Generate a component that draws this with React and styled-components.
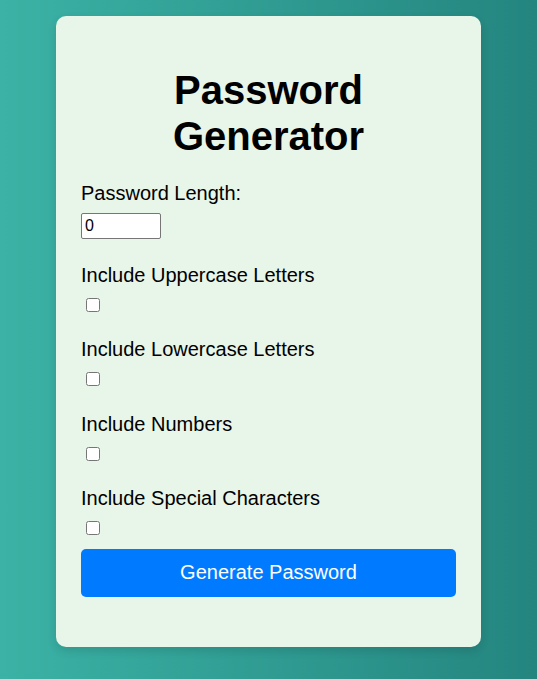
import styled, { createGlobalStyle } from "styled-components";

const GlobalStyle = createGlobalStyle`
  html, body {
    margin: 0;
    padding: 0;
  }

  body {
    min-height: 100vh;
    font-family: "Liberation Sans", Arial, sans-serif;
    background: linear-gradient(to right, #3bb2a5, #24857f);
  }
`;

const Page = styled.div`
  display: flex;
  justify-content: center;
  padding: 16px 0 31px;
`;

const Card = styled.div`
  width: 425px;
  box-sizing: border-box;
  padding: 25px;
  background-color: #e8f5e9;
  border-radius: 10px;
  box-shadow: 0 4px 10px rgba(0, 0, 0, 0.12);
  display: flex;
  flex-direction: column;
`;

const Title = styled.h1`
  margin: 26px 0 23px;
  font-size: 40px;
  font-weight: bold;
  line-height: 46px;
  text-align: center;
  color: #000;
`;

const Field = styled.div`
  display: flex;
  flex-direction: column;
  align-items: flex-start;

  & + & {
    margin-top: 24.6px;
  }
`;

const Label = styled.label`
  display: block;
  font-size: 20px;
  line-height: 23px;
  color: #000;
  margin-bottom: 8px;
`;

const NumberInput = styled.input`
  width: 80px;
  height: 26px;
  box-sizing: border-box;
  font-family: "Liberation Sans", Arial, sans-serif;
  font-size: 16px;
  padding: 1px 3px;
  border: 1px solid #767676;
  border-radius: 2px;
  background: #fff;
  color: #000;
`;

const Checkbox = styled.input`
  width: 14px;
  height: 14px;
  margin: 3px 3px 2px 5px;
`;

const GenerateButton = styled.button`
  margin: 11.6px 0 25px;
  height: 48px;
  border: none;
  border-radius: 5px;
  background-color: #007bff;
  color: #fff;
  font-family: "Liberation Sans", Arial, sans-serif;
  font-size: 20px;
  cursor: pointer;
`;

const options = [
  { id: "upper", label: "Include Uppercase Letters" },
  { id: "lower", label: "Include Lowercase Letters" },
  { id: "numbers", label: "Include Numbers" },
  { id: "special", label: "Include Special Characters" },
];

const App = () => {
  return (
    <>
      <GlobalStyle />
      <Page>
        <Card>
          <Title>Password Generator</Title>
          <Field>
            <Label htmlFor="length">Password Length:</Label>
            <NumberInput id="length" type="number" defaultValue={0} />
          </Field>
          {options.map((opt) => (
            <Field key={opt.id}>
              <Label htmlFor={opt.id}>{opt.label}</Label>
              <Checkbox id={opt.id} type="checkbox" />
            </Field>
          ))}
          <GenerateButton>Generate Password</GenerateButton>
        </Card>
      </Page>
    </>
  );
};

export default App;
